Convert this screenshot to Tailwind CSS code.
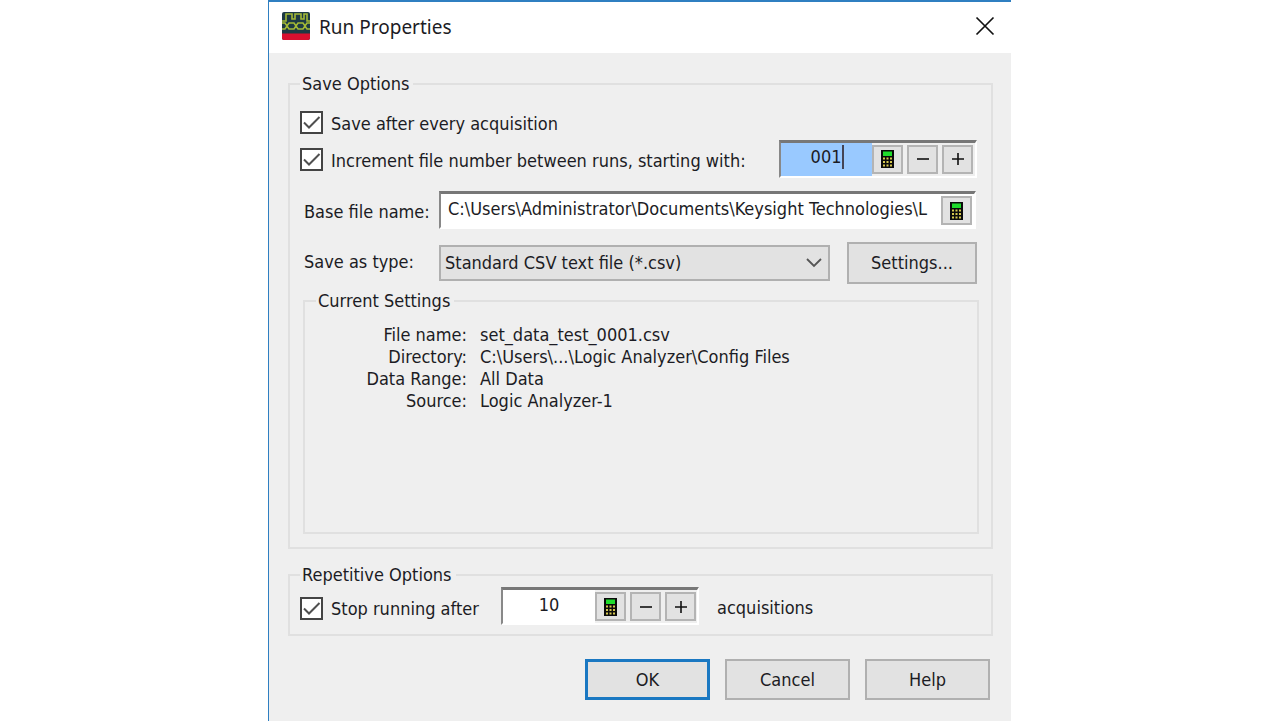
<!DOCTYPE html>
<html lang="en">
<head>
<meta charset="utf-8">
<meta name="viewport" content="width=device-width, initial-scale=1">
<title>Run Properties</title>
<script src="https://cdn.jsdelivr.net/npm/@tailwindcss/browser@4"></script>
</head>
<body class="bg-white pr-px font-['DejaVu_Sans_Condensed','Noto_Sans',sans-serif] text-[18px] leading-6 text-[#1c1c24]">
<svg class="hidden" aria-hidden="true">
  <symbol id="calc" viewBox="0 0 13 18">
    <rect width="13" height="18" fill="#0a0a0a"/>
    <rect x="2" y="1.5" width="9" height="4.5" fill="#1fdc2c"/>
    <g fill="#d6c850">
      <rect x="2" y="7.5" width="2" height="2"/><rect x="5.5" y="7.5" width="2" height="2"/><rect x="9" y="7.5" width="2" height="2"/>
      <rect x="2" y="11" width="2" height="2"/><rect x="5.5" y="11" width="2" height="2"/><rect x="9" y="11" width="2" height="2"/>
      <rect x="2" y="14.5" width="2" height="2"/><rect x="5.5" y="14.5" width="2" height="2"/><rect x="9" y="14.5" width="2" height="2"/>
    </g>
  </symbol>
  <symbol id="minus" viewBox="0 0 14 14"><path d="M1 7h12" stroke="#111" stroke-width="1.6"/></symbol>
  <symbol id="plus" viewBox="0 0 14 14"><path d="M1 7h12M7 1v12" stroke="#111" stroke-width="1.6"/></symbol>
  <symbol id="tick" viewBox="0 0 23 23"><path d="M4 11.5l5 5L19.5 6" fill="none" stroke="#505050" stroke-width="2"/></symbol>
</svg>
<main class="mx-auto min-h-screen max-w-[743px] border-t-2 border-l border-[#2f7fc1] bg-[#efefef]">
  <header class="flex h-[51px] items-center justify-between bg-white pr-4 pb-[3px] pl-[13px]">
    <div class="flex items-center gap-[9px]">
      <svg class="size-7" viewBox="0 0 28 28" aria-hidden="true">
        <rect width="28" height="28" rx="2" fill="#1d3a44"/>
        <path d="M0 21.5h28V26a2 2 0 0 1-2 2H2a2 2 0 0 1-2-2z" fill="#d8102f"/>
        <path d="M0 9h4V2h6v5h3V2h6v5h3V2h3v7h3" fill="none" stroke="#a3b936" stroke-width="1.6"/>
        <path d="M0 11h3l4 6h5l4-6h5l4 6h3M0 17h3l4-6h5l4 6h5l4-6h3" fill="none" stroke="#a3b936" stroke-width="1.6"/>
      </svg>
      <h1 class="pt-[2px] font-['Noto_Sans','Open_Sans',sans-serif] text-[19px] leading-7">Run Properties</h1>
    </div>
    <button type="button" aria-label="Close" class="flex size-5 items-center justify-center">
      <svg class="size-5" viewBox="0 0 20 20"><path d="M1.500 1.500l17 17M18.500 1.500l-17 17" stroke="#111" stroke-width="1.7"/></svg>
    </button>
  </header>

  <form class="pt-[19px] pr-[18px] pl-[19px]">
    <fieldset class="border-2 border-[#e0e0e0] pr-[14px] pb-[13px] pl-[10px]">
      <legend class="pr-1 pl-[2px]">Save Options</legend>
      <div class="flex h-11 items-center pt-[9px]">
        <label class="flex items-center gap-2">
          <span class="relative flex size-[23px]">
            <input type="checkbox" checked class="size-[23px] appearance-none border-2 border-[#444] bg-white">
            <svg class="pointer-events-none absolute inset-0 size-[23px]"><use href="#tick"/></svg>
          </span>
          <span class="pt-[2px]">Save after every acquisition</span>
        </label>
      </div>
      <div class="flex h-[39px] items-center justify-between">
        <label class="flex items-center gap-2">
          <span class="relative flex size-[23px]">
            <input type="checkbox" checked class="size-[23px] appearance-none border-2 border-[#444] bg-white">
            <svg class="pointer-events-none absolute inset-0 size-[23px]"><use href="#tick"/></svg>
          </span>
          <span class="pt-[2px]">Increment file number between runs, starting with:</span>
        </label>
        <div class="mb-[2px] flex h-[38px] w-[198px] border-2 border-t-[3px] border-t-[#777] border-r-white border-b-white border-l-[#888]">
          <div class="flex w-[91px] items-center justify-center bg-[#99c9ff] pb-1">
            <input type="text" aria-label="Starting number" value="001" class="w-[34px] border-r-2 border-[#445] bg-transparent text-right outline-none">
          </div>
          <div class="flex items-center gap-1">
            <button type="button" aria-label="Calculator" class="flex h-[29px] w-[31px] items-center justify-center border-2 border-[#b4b4b4] bg-[#e2e2e2]"><svg class="h-[18px] w-[13px]"><use href="#calc"/></svg></button>
            <button type="button" aria-label="Decrease" class="flex h-[29px] w-[31px] items-center justify-center border-2 border-[#b4b4b4] bg-[#e2e2e2]"><svg class="size-[14px]"><use href="#minus"/></svg></button>
            <button type="button" aria-label="Increase" class="flex h-[29px] w-[31px] items-center justify-center border-2 border-[#b4b4b4] bg-[#e2e2e2]"><svg class="size-[14px]"><use href="#plus"/></svg></button>
          </div>
        </div>
      </div>
      <div class="mt-3 flex items-center pl-1">
        <label for="base" class="w-[135px] shrink-0 pt-1">Base file name:</label>
        <div class="mr-px flex h-[38px] min-w-0 grow items-center border-2 border-t-[3px] border-t-[#777] border-r-white border-b-white border-l-[#888] bg-white pr-[2px]">
          <input id="base" type="text" value="C:\Users\Administrator\Documents\Keysight Technologies\L" class="min-w-0 grow bg-transparent pb-1 pl-[7px] outline-none">
          <button type="button" aria-label="Calculator" class="flex h-[29px] w-[31px] shrink-0 items-center justify-center border-2 border-[#b4b4b4] bg-[#e2e2e2]"><svg class="h-[18px] w-[13px]"><use href="#calc"/></svg></button>
        </div>
      </div>
      <div class="mt-[13px] flex items-center pl-1">
        <label for="type" class="w-[135px] shrink-0 pb-[2px]">Save as type:</label>
        <div class="relative grow">
          <select id="type" class="h-9 w-full appearance-none border-2 border-[#b0b0b0] bg-[#e2e2e2] pl-1"><option>Standard CSV text file (*.csv)</option></select>
          <svg class="pointer-events-none absolute top-3 right-2 h-3 w-4" viewBox="0 0 16 12"><path d="M1 2l7 7 7-7" fill="none" stroke="#555" stroke-width="1.8"/></svg>
        </div>
        <button type="button" class="ml-[17px] h-[42px] w-[130px] border-2 border-[#b0b0b0] bg-[#e2e2e2]">Settings...</button>
      </div>
      <fieldset class="mt-[5px] -mr-[2px] ml-[3px] h-[245px] border-2 border-[#e0e0e0] px-2">
        <legend class="ml-[3px] pr-1 pl-[2px]">Current Settings</legend>
        <dl class="grid grid-cols-[154px_1fr] gap-x-[13px] pt-[11px] leading-[22px]">
          <dt class="text-right">File name:</dt><dd>set_data_test_0001.csv</dd>
          <dt class="text-right">Directory:</dt><dd>C:\Users\...\Logic Analyzer\Config Files</dd>
          <dt class="text-right">Data Range:</dt><dd>All Data</dd>
          <dt class="text-right">Source:</dt><dd>Logic Analyzer-1</dd>
        </dl>
      </fieldset>
    </fieldset>

    <fieldset class="mt-[14px] border-2 border-[#e0e0e0] pb-[9px] pl-[10px]">
      <legend class="pr-1 pl-[2px]">Repetitive Options</legend>
      <div class="flex items-center">
        <label class="flex items-center gap-2 pt-1">
          <span class="relative flex size-[23px]">
            <input type="checkbox" checked class="size-[23px] appearance-none border-2 border-[#444] bg-white">
            <svg class="pointer-events-none absolute inset-0 size-[23px]"><use href="#tick"/></svg>
          </span>
          <span class="w-[170px] pt-[2px]">Stop running after</span>
        </label>
        <div class="flex h-[38px] w-[198px] border-2 border-t-[3px] border-t-[#777] border-r-white border-b-white border-l-[#888]">
          <input type="text" aria-label="Number of acquisitions" value="10" class="w-[92px] bg-white pb-1 text-center outline-none">
          <div class="flex items-center gap-1">
            <button type="button" aria-label="Calculator" class="flex h-[29px] w-[31px] items-center justify-center border-2 border-[#b4b4b4] bg-[#e2e2e2]"><svg class="h-[18px] w-[13px]"><use href="#calc"/></svg></button>
            <button type="button" aria-label="Decrease" class="flex h-[29px] w-[31px] items-center justify-center border-2 border-[#b4b4b4] bg-[#e2e2e2]"><svg class="size-[14px]"><use href="#minus"/></svg></button>
            <button type="button" aria-label="Increase" class="flex h-[29px] w-[31px] items-center justify-center border-2 border-[#b4b4b4] bg-[#e2e2e2]"><svg class="size-[14px]"><use href="#plus"/></svg></button>
          </div>
        </div>
        <span class="pt-1 pl-[18px]">acquisitions</span>
      </div>
    </fieldset>

    <div class="mt-[23px] flex justify-end gap-[15px] pr-[3px]">
      <button type="submit" class="h-[41px] w-[125px] border-[3px] border-[#1a78c2] bg-[#e2e2e2]">OK</button>
      <button type="button" class="h-[41px] w-[125px] border-2 border-[#b0b0b0] bg-[#e2e2e2]">Cancel</button>
      <button type="button" class="h-[41px] w-[125px] border-2 border-[#b0b0b0] bg-[#e2e2e2]">Help</button>
    </div>
  </form>
</main>
</body>
</html>
